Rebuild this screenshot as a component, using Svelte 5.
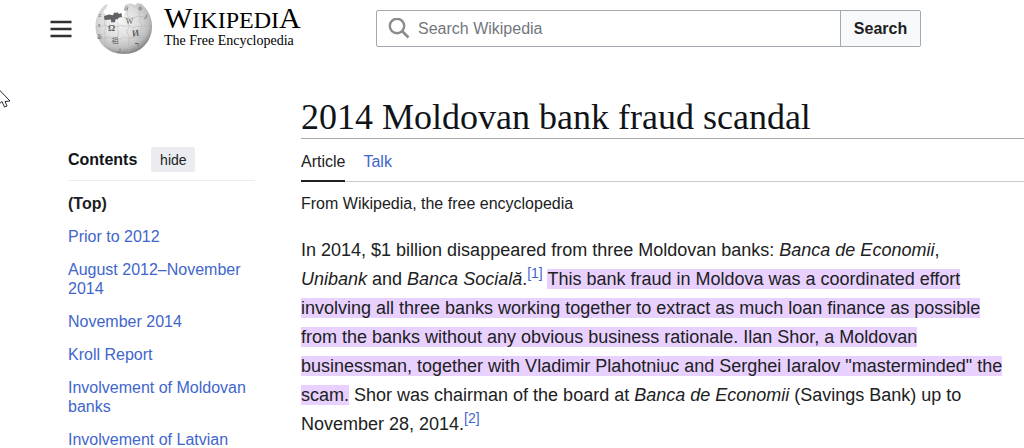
<script>
  const contents = [
    'Prior to 2012',
    'August 2012–November 2014',
    'November 2014',
    'Kroll Report',
    'Involvement of Moldovan banks',
    'Involvement of Latvian'
  ];
</script>

<header>
  <button class="menu" aria-label="Main menu">
    <svg width="22" height="18" viewBox="0 0 22 18" aria-hidden="true">
      <path d="M0.500 2h21M0.500 9h21M0.500 16h21" stroke="#303030" stroke-width="2.500" />
    </svg>
  </button>
  <a class="logo" href="#top">
    <svg class="globe" width="58" height="56" viewBox="95 0 58 56" aria-hidden="true">
      <defs>
        <radialGradient id="ball" cx="0.42" cy="0.36" r="0.66">
          <stop offset="0" stop-color="#f4f4f4" />
          <stop offset="0.5" stop-color="#dedede" />
          <stop offset="0.8" stop-color="#bdbdbd" />
          <stop offset="1" stop-color="#808080" />
        </radialGradient>
      </defs>
      <path d="M105 5C99 10 95.500 18 95.500 26c0 16 12 28 28.500 28s28-12 28-27.500c0-9.500-4-17-10.500-22.500l-4-1-2 2-3.500-1-1.500-.5-5 .8-1 2.500 1 4-2.500 8h-18l.5-5-2-1 1-3 2-1.500v-2l2-1.500z" fill="url(#ball)" />
      <path d="M104 16l5-1.500 4 .8 1-2.500 4-.3.800 1.500 2.700-1 .5 4-3.300.8-1 1.400-2.500.2v2.800h-4l-.3-2.600-6.400.5z" fill="#626262" />
      <g fill="none" stroke="#b3b3b3" stroke-width="0.5">
        <path d="M96 27c3-1 5 1 7-1s5 2 8 0 5 2 8 0 5 2 8 0 4 3 8 1 8 1 15-2" />
        <path d="M98 38c3-1 5 2 8 0s5 1 8 0 4 3 8 0 5 2 9 0 8 1 14-2" />
        <path d="M105 20c-2 4 2 6 0 9s1 8 0 11 2 4 3 7M117 22c3 3-1 5 1 8s-2 7 0 10-2 8 1 12M128 12c-2 4 2 5 0 8s3 6 0 9 3 8 1 11 2 7-1 12M140 10c-3 4 2 6 0 9s3 6 1 10 2 6-1 10-1 5-4 9" />
        <path d="M121 18c3-2 5 1 7 0s5 1 8-1 6 1 11-1" />
      </g>
      <g class="glyphs" fill="#5c5c5c" text-anchor="middle">
        <text x="111.500" y="31" font-size="9" font-weight="bold">Ω</text>
        <text x="129.500" y="23.500" font-size="8">W</text>
        <text x="135.500" y="36" font-size="9" font-weight="bold" transform="rotate(-8 135 33)">И</text>
        <text x="115" y="43" font-size="7">祖</text>
        <text x="137" y="47" font-size="8" font-weight="bold">ר</text>
        <text x="119" y="52" font-size="5">ل</text>
        <text x="126" y="11" font-size="6" transform="rotate(15 126 9)">Й</text>
        <text x="146" y="19" font-size="7" transform="rotate(18 146 16)">J</text>
        <text x="140" y="10" font-size="7">ϕ</text>
        <text x="98.500" y="27" font-size="5">ಕ</text>
        <text x="99.500" y="38" font-size="5">あ</text>
        <text x="100" y="17" font-size="5">Z</text>
      </g>
    </svg>
    <span class="brand">
      <span class="wordmark">W<small>IKIPEDI</small>A</span>
      <span class="tagline">The Free Encyclopedia</span>
    </span>
  </a>
  <form role="search" onsubmit={(e) => e.preventDefault()}>
    <label class="field">
      <svg width="22" height="22" viewBox="0 0 22 22" fill="none" stroke="#8c8c8c" role="img" aria-label="Search">
        <circle cx="9" cy="8" r="7.200" stroke-width="2.400" />
        <path d="M14 13l6.500 6.500" stroke-width="2.600" />
      </svg>
      <input type="search" placeholder="Search Wikipedia" />
    </label>
    <button class="go">Search</button>
  </form>
</header>

<svg class="cursor" width="11" height="20" viewBox="0 0 11 20" aria-hidden="true">
  <path d="M-2.500-2V15.500L2 11.500 4.500 17 7 16 5 11.500l5-.5z" fill="#fff" stroke="#292936" />
</svg>

<div class="page" id="top">
  <nav aria-label="Contents">
    <div class="toc-head">
      <h2>Contents</h2>
      <button class="hide">hide</button>
    </div>
    <ul>
      <li><a class="current" href="#top">(Top)</a></li>
      {#each contents as item}
        <li><a href="#top">{item}</a></li>
      {/each}
    </ul>
  </nav>

  <main>
    <h1>2014 Moldovan bank fraud scandal</h1>
    <div class="tabs">
      <a class="active" href="#top">Article</a>
      <a href="#top">Talk</a>
    </div>
    <div class="from">From Wikipedia, the free encyclopedia</div>
    <p>
      In 2014, $1 billion disappeared from three Moldovan banks: <i>Banca de Economii</i>, <i>Unibank</i> and
      <i>Banca Socială</i>.<sup><a href="#top">[1]</a></sup>
      <mark>This bank fraud in Moldova was a coordinated effort involving all three banks working together to extract as much loan finance as possible from the banks without any obvious business rationale. Ilan Shor, a Moldovan businessman, together with Vladimir Plahotniuc and Serghei Iaralov "masterminded" the scam.</mark>
      Shor was chairman of the board at <i>Banca de Economii</i> (Savings Bank) up to November 28, 2014.<sup><a href="#top">[2]</a></sup>
    </p>
  </main>
</div>

<style>
  :global(body) {
    margin: 0;
    background: #fff;
    color: #202122;
    font-family: "Liberation Sans", Arial, sans-serif;
    overflow: hidden;
  }
  a {
    color: #3f66cc;
    text-decoration: none;
  }
  button,
  input {
    font: inherit;
    color: inherit;
    margin: 0;
  }
  header {
    display: flex;
    align-items: flex-start;
    padding-left: 50px;
    height: 56px;
  }
  .menu {
    display: flex;
    padding: 0;
    margin-top: 20px;
    border: 0;
    background: none;
  }
  .logo {
    display: flex;
    gap: 11px;
    width: 281px;
    margin-left: 23px;
    flex: none;
    color: #000;
  }
  .glyphs {
    font-family: "Liberation Serif", "Noto Sans CJK SC", serif;
  }
  .brand {
    display: flex;
    flex-direction: column;
    padding-top: 5px;
    font-family: "Liberation Serif", serif;
    white-space: nowrap;
  }
  .wordmark {
    font-size: 30px;
    line-height: 26px;
  }
  .wordmark small {
    font-size: 24px;
  }
  .tagline {
    font-size: 14px;
    line-height: 16px;
  }
  form {
    display: flex;
    flex: 0 1 545px;
    height: 37px;
    margin-top: 10px;
    box-sizing: border-box;
    border: 1px solid #a2a9b1;
    border-radius: 2px;
  }
  .field {
    display: flex;
    align-items: center;
    flex: 1;
    gap: 8px;
    padding-left: 11px;
  }
  input {
    flex: 1;
    min-width: 0;
    padding: 0;
    border: 0;
    outline: 0;
    background: none;
    font-size: 16px;
  }
  input::placeholder {
    color: #72777d;
    opacity: 1;
  }
  .go {
    width: 80px;
    padding: 0;
    border: 0;
    border-left: 1px solid #a2a9b1;
    background: #f8f9fa;
    font-size: 16px;
    font-weight: bold;
  }
  .cursor {
    position: absolute;
    left: 0;
    top: 90px;
  }
  .page {
    display: grid;
    grid-template-columns: 187px minmax(0, 1fr);
    column-gap: 46px;
    padding-left: 68px;
  }
  nav {
    padding-top: 91px;
  }
  .toc-head {
    display: flex;
    align-items: center;
    gap: 14px;
    padding-bottom: 8px;
    border-bottom: 1px solid #eaecf0;
  }
  h2 {
    margin: 0;
    font-size: 16px;
    line-height: 25px;
    color: #101418;
  }
  .hide {
    width: 44px;
    height: 25px;
    padding: 0;
    border: 0;
    border-radius: 2px;
    background: #eaecf0;
    font-size: 14px;
  }
  ul {
    display: flex;
    flex-direction: column;
    gap: 14px;
    margin: 0;
    padding: 13px 0 0;
    list-style: none;
    font-size: 16px;
    line-height: 19px;
  }
  .current {
    color: #202122;
    font-weight: bold;
  }
  main {
    padding-top: 40px;
  }
  h1 {
    margin: 0;
    border-bottom: 1px solid #a2a9b1;
    font-family: "Liberation Serif", serif;
    font-size: 36px;
    font-weight: normal;
    line-height: 42px;
    color: #101418;
  }
  .tabs {
    display: flex;
    gap: 18px;
    border-bottom: 1px solid #c8ccd1;
    font-size: 16px;
    line-height: 19px;
  }
  .tabs a {
    padding: 13px 0 9px;
    margin-bottom: -1px;
    border-bottom: 2px solid transparent;
  }
  .tabs .active {
    color: #202122;
    border-bottom-color: #202122;
  }
  .from {
    padding-top: 12px;
    font-size: 16px;
    line-height: 19px;
  }
  p {
    margin: 23px 16px 0 0;
    font-size: 18px;
    line-height: 29px;
  }
  sup {
    font-size: 14px;
    line-height: 1;
  }
  mark {
    background: #e8d1ff;
    color: #202122;
  }
</style>
